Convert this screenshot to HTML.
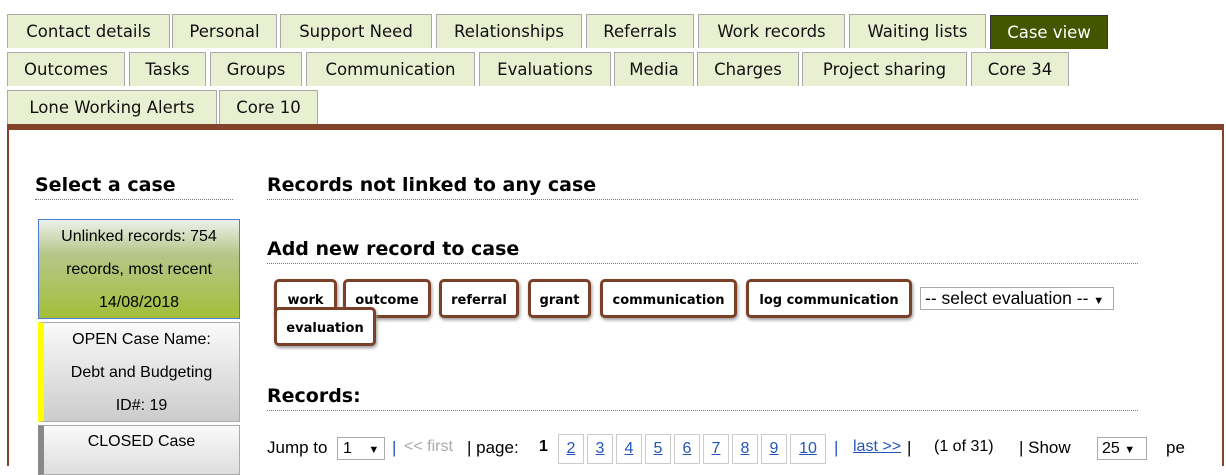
<!DOCTYPE html>
<html><head><meta charset="utf-8"><style>
*{margin:0;padding:0;box-sizing:border-box}
body{width:1226px;height:466px;overflow:hidden;background:#fff;position:relative;font-family:"Liberation Sans",Arial,sans-serif;color:#000}
.t{position:absolute;height:34px;background:#e9f0d2;border:1px solid #aaa;border-bottom:none;font-family:"DejaVu Sans",Verdana,sans-serif;font-size:16.5px;line-height:33px;text-align:center;color:#111;white-space:nowrap}
.t.a{background:#445500;color:#fff;border-color:#334}
.abs{position:absolute}
h2{position:absolute;font-family:"DejaVu Sans",Verdana,sans-serif;font-size:19px;font-weight:bold;white-space:nowrap;border-bottom:1px dotted #777;padding-bottom:3px}
.b{position:absolute;height:39px;border:3px solid #7a4128;border-radius:5px;background:#fff;font-family:"DejaVu Sans",Verdana,sans-serif;font-weight:bold;font-size:13px;text-align:center;line-height:38px;box-shadow:1px 2px 3px #999}
.c{position:absolute;left:38px;width:202px;text-align:center;font-size:16px;line-height:33px;border:1px solid #aaa}
.pg{position:absolute;top:434px;height:30px;border:1px solid #ccc;font-size:16px;line-height:28px;text-align:center;color:#2255bb;text-decoration:underline}
.tx{position:absolute;top:438px;font-size:17px;white-space:nowrap}
</style></head><body>
<div class="t" style="left:7px;top:14px;width:163px">Contact details</div>
<div class="t" style="left:172px;top:14px;width:105px">Personal</div>
<div class="t" style="left:280px;top:14px;width:152px">Support Need</div>
<div class="t" style="left:436px;top:14px;width:146px">Relationships</div>
<div class="t" style="left:586px;top:14px;width:108px">Referrals</div>
<div class="t" style="left:698px;top:14px;width:147px">Work records</div>
<div class="t" style="left:849px;top:14px;width:137px">Waiting lists</div>
<div class="t a" style="left:990px;top:15px;width:118px;height:34px">Case view</div>
<div class="t" style="left:7px;top:52px;width:118px">Outcomes</div>
<div class="t" style="left:129px;top:52px;width:77px">Tasks</div>
<div class="t" style="left:210px;top:52px;width:92px">Groups</div>
<div class="t" style="left:306px;top:52px;width:169px">Communication</div>
<div class="t" style="left:479px;top:52px;width:132px">Evaluations</div>
<div class="t" style="left:614px;top:52px;width:80px">Media</div>
<div class="t" style="left:697px;top:52px;width:102px">Charges</div>
<div class="t" style="left:802px;top:52px;width:165px">Project sharing</div>
<div class="t" style="left:971px;top:52px;width:98px">Core 34</div>
<div class="t" style="left:7px;top:90px;width:210px">Lone Working Alerts</div>
<div class="t" style="left:219px;top:90px;width:99px">Core 10</div>
<div class="abs" style="left:7px;top:124px;width:1217px;height:6px;background:#83432a"></div>
<div class="abs" style="left:7px;top:130px;width:2px;height:336px;background:#83432a"></div>
<div class="abs" style="left:1222px;top:130px;width:2px;height:336px;background:#83432a"></div>

<h2 style="left:35px;top:174px;width:198px">Select a case</h2>
<div class="c" style="top:219px;height:100px;border:1px solid #4a7fd0;background:linear-gradient(#eef0ea,#b5c78a 35%,#a2bf3a)">Unlinked records: 754<br>records, most recent<br>14/08/2018</div>
<div class="c" style="top:322px;height:100px;background:linear-gradient(#fafafa,#ccc);border-left:6px solid #ff0">OPEN Case Name:<br>Debt and Budgeting<br>ID#: 19</div>
<div class="c" style="top:425px;height:50px;background:linear-gradient(#fafafa,#ddd);border-left:6px solid #888;line-height:32px">CLOSED Case</div>

<h2 style="left:267px;top:174px;width:871px">Records not linked to any case</h2>
<h2 style="left:267px;top:238px;width:871px">Add new record to case</h2>
<div class="b" style="left:274px;top:279px;width:63px">work</div>
<div class="b" style="left:343px;top:279px;width:88px">outcome</div>
<div class="b" style="left:439px;top:279px;width:80px">referral</div>
<div class="b" style="left:528px;top:279px;width:63px">grant</div>
<div class="b" style="left:600px;top:279px;width:137px">communication</div>
<div class="b" style="left:746px;top:279px;width:166px">log communication</div>
<div class="b" style="left:274px;top:307px;width:102px">evaluation</div>
<div class="abs" style="left:920px;top:287px;width:194px;height:23px;border:1px solid #aaa;font-size:17.5px;line-height:21px;padding-left:4px;white-space:nowrap">-- select evaluation -- <span style="font-size:11px">▼</span></div>
<h2 style="left:267px;top:385px;width:871px">Records:</h2>

<div class="tx" style="left:267px">Jump to</div>
<div class="abs" style="left:337px;top:437px;width:48px;height:23px;border:1px solid #aaa;font-size:16px;line-height:21px;padding-left:5px">1 <span style="font-size:11px;margin-left:12px">▼</span></div>
<div class="tx" style="left:392px;color:#2255bb">|</div>
<div class="tx" style="left:404px;color:#aaa;font-size:16px">&lt;&lt; first</div>
<div class="tx" style="left:467px">| page:</div>
<div class="tx" style="left:539px;font-weight:bold;font-size:16px">1</div>
<div class="pg" style="left:558px;width:26px">2</div>
<div class="pg" style="left:587px;width:26px">3</div>
<div class="pg" style="left:616px;width:26px">4</div>
<div class="pg" style="left:645px;width:26px">5</div>
<div class="pg" style="left:674px;width:26px">6</div>
<div class="pg" style="left:703px;width:26px">7</div>
<div class="pg" style="left:732px;width:26px">8</div>
<div class="pg" style="left:761px;width:26px">9</div>
<div class="pg" style="left:790px;width:36px">10</div>
<div class="tx" style="left:834px;color:#2255bb">|</div>
<div class="tx" style="left:853px;color:#2255bb;text-decoration:underline;font-size:16px">last &gt;&gt;</div>
<div class="tx" style="left:907px">|</div>
<div class="tx" style="left:934px;font-size:16px">(1 of 31)</div>
<div class="tx" style="left:1019px">| Show</div>
<div class="abs" style="left:1097px;top:437px;width:50px;height:23px;border:1px solid #aaa;font-size:16px;line-height:21px;padding-left:4px">25 <span style="font-size:11px">▼</span></div>
<div class="tx" style="left:1166px">pe</div>
</body></html>
